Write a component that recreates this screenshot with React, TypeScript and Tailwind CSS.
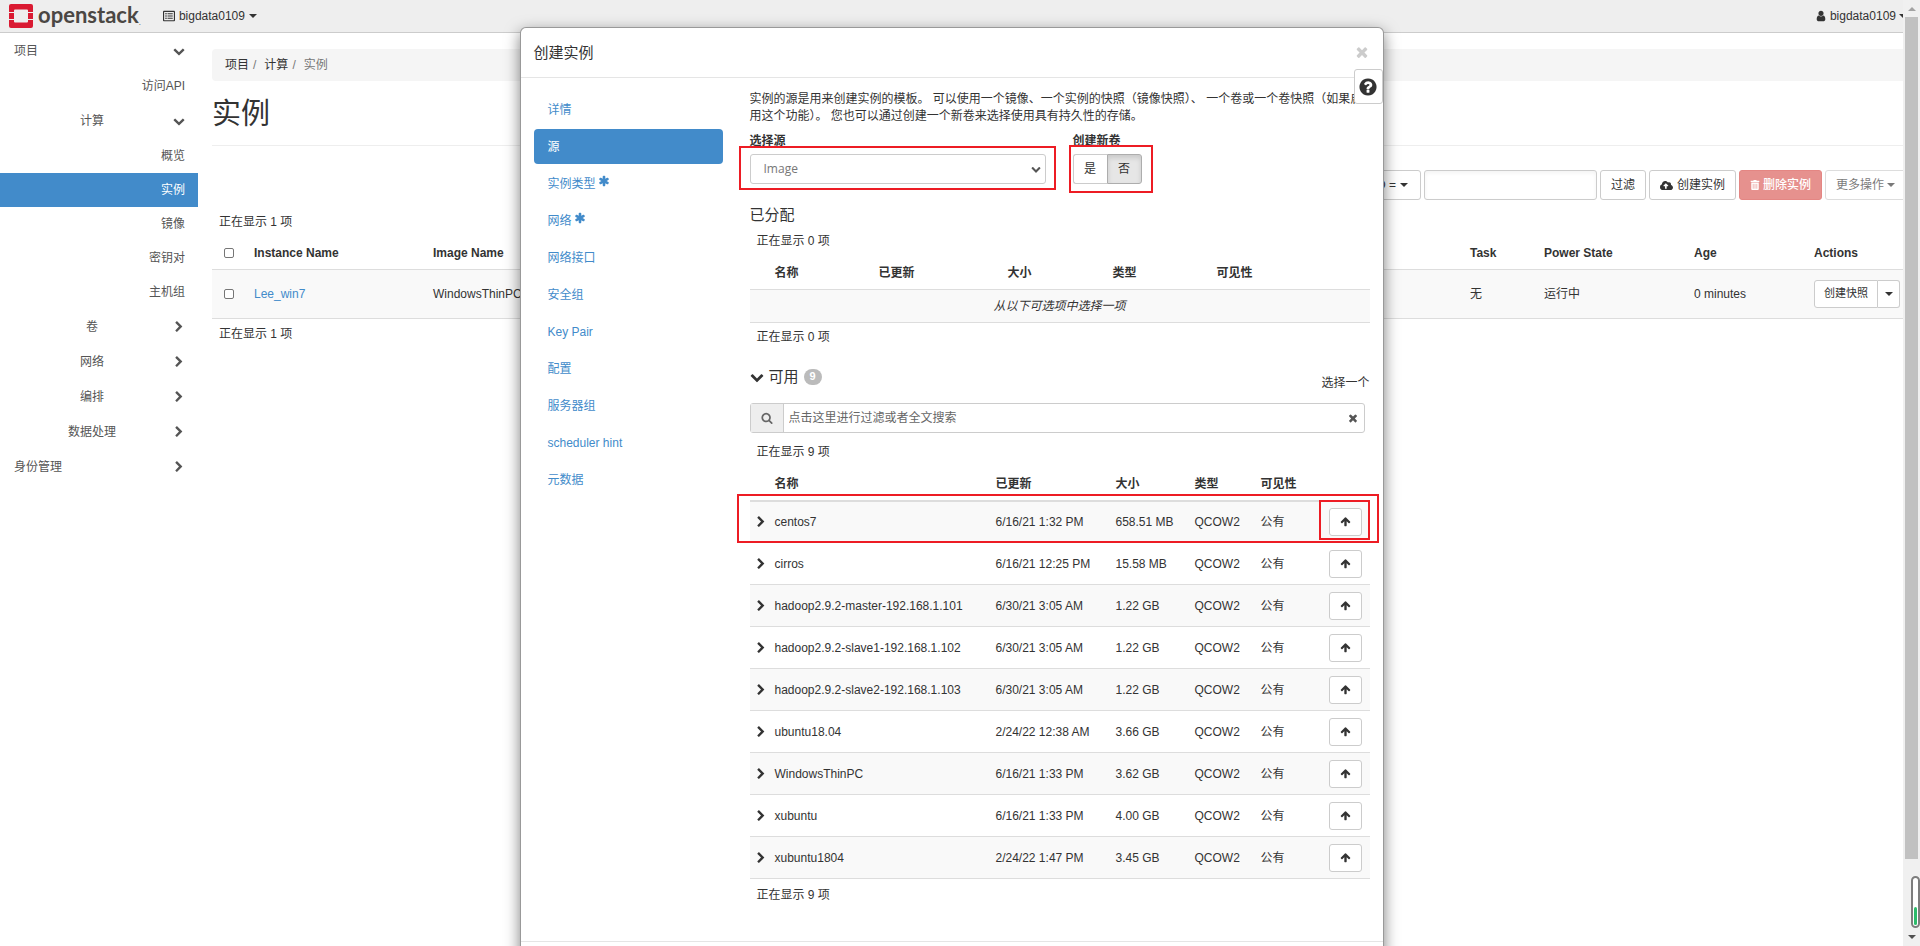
import type { ReactNode } from "react";
import { FaCloudUploadAlt, FaRegListAlt, FaTrashAlt } from "react-icons/fa";

const ICONS = {
  right:
    "M1363 877l-742 742q-19 19-45 19t-45-19l-166-166q-19-19-19-45t19-45l531-531-531-531q-19-19-19-45t19-45l166-166q19-19 45-19t45 19l742 742q19 19 19 45t-19 45z",
  down: "M1683 808l-742 741q-19 19-45 19t-45-19l-742-741q-19-19-19-45.5t19-45.5l166-165q19-19 45-19t45 19l531 531 531-531q19-19 45-19t45 19l166 165q19 19 19 45.5t-19 45.5z",
  up: "M1675 971q0 51-37 90l-75 75q-38 38-91 38-54 0-90-38l-294-293v704q0 52-37.5 84.5t-90.5 32.5h-128q-53 0-90.5-32.5t-37.5-84.5v-704l-294 293q-36 38-90 38t-90-38l-75-75q-38-38-38-90 0-53 38-91l651-651q35-37 90-37 54 0 91 37l651 651q37 39 37 91z",
  times:
    "M1490 1322q0 40-28 68l-136 136q-28 28-68 28t-68-28l-294-294-294 294q-28 28-68 28t-68-28l-136-136q-28-28-28-68t28-68l294-294-294-294q-28-28-28-68t28-68l136-136q28-28 68-28t68 28l294 294 294-294q28-28 68-28t68 28l136 136q28 28 28 68t-28 68l-294 294 294 294q28 28 28 68z",
  asterisk:
    "M1546 1050q46 26 59.5 77.5t-12.5 97.5l-64 110q-26 46-77.5 59.5t-97.5-12.5l-266-153v307q0 52-38 90t-90 38h-128q-52 0-90-38t-38-90v-307l-266 153q-46 26-97.5 12.5t-77.5-59.5l-64-110q-26-46-12.5-97.5t59.5-77.5l266-154-266-154q-46-26-59.5-77.5t12.5-97.5l64-110q26-46 77.5-59.5t97.5 12.5l266 153v-307q0-52 38-90t90-38h128q52 0 90 38t38 90v307l266-153q46-26 97.5-12.5t77.5 59.5l64 110q26 46 12.5 97.5t-59.5 77.5l-266 154z",
  search:
    "M1216 832q0-185-131.5-316.5t-316.5-131.5-316.5 131.5-131.5 316.5 131.5 316.5 316.5 131.5 316.5-131.5 131.5-316.5zm512 832q0 52-38 90t-90 38q-54 0-90-38l-343-342q-179 124-399 124-143 0-273.5-55.5t-225-150-150-225-55.5-273.5 55.5-273.5 150-225 225-150 273.5-55.5 273.5 55.5 225 150 150 225 55.5 273.5q0 220-124 399l343 343q37 37 37 90z",
  user: "M1536 1399q0 109-62.5 187t-150.5 78h-854q-88 0-150.5-78t-62.5-187q0-85 8.5-160.5t31.5-152 58.5-131 94-89 134.5-34.5q131 128 313 128t313-128q76 0 134.5 34.5t94 89 58.5 131 31.5 152 8.5 160.5zm-256-887q0 159-112.5 271.5t-271.5 112.5-271.5-112.5-112.5-271.5 112.5-271.5 271.5-112.5 271.5 112.5 112.5 271.5z",
  help: "M1024 1376v-192q0-14-9-23t-23-9h-192q-14 0-23 9t-9 23v192q0 14 9 23t23 9h192q14 0 23-9t9-23zm256-672q0-88-55.5-163t-138.5-116-170-41q-243 0-371 213-15 24 8 42l132 100q7 6 19 6 16 0 25-12 53-68 86-92 34-24 86-24 48 0 85.5 26t37.5 59q0 38-20 61t-68 45q-63 28-115.5 86.5t-52.5 125.5v36q0 14 9 23t23 9h192q14 0 23-9t9-23q0-19 21.5-49.5t54.5-49.5q32-18 49-28.5t46-35 44.5-48 28-60.5 12.5-81zm384 192q0 209-103 385.5t-279.5 279.5-385.5 103-385.5-103-279.5-279.5-103-385.5 103-385.5 279.5-279.5 385.5-103 385.5 103 279.5 279.5 103 385.5z",
};

function Icon({ name, className = "" }: { name: keyof typeof ICONS; className?: string }) {
  return (
    <svg viewBox="0 0 1792 1792" className={`shrink-0 fill-current ${className}`} aria-hidden="true">
      <path d={ICONS[name]} />
    </svg>
  );
}

function Caret() {
  return (
    <svg viewBox="0 0 8 4" className="w-2 h-1 shrink-0 fill-current" aria-hidden="true">
      <path d="M0 0h8L4 4z" />
    </svg>
  );
}

function Logo() {
  return (
    <a href="#" className="flex items-center text-[#4b4743]">
      <svg viewBox="0 0 24 24" className="w-6 h-6" aria-hidden="true">
        <path
          fill="#da1a32"
          d="M2 0h20a2 2 0 0 1 2 2v6h-5V6.500a1 1 0 0 0-1-1H6a1 1 0 0 0-1 1V8H0V2a2 2 0 0 1 2-2zM0 9h5v6H0zM19 9h5v6h-5zM0 16h5v1.500a1 1 0 0 0 1 1h12a1 1 0 0 0 1-1V16h5v6a2 2 0 0 1-2 2H2a2 2 0 0 1-2-2z"
        />
      </svg>
      <span className="ml-[5px] pb-[2px] text-[22px] leading-6 font-bold font-['Lato',sans-serif]">openstack</span>
      <span className="self-end text-[8px] leading-3">.</span>
    </a>
  );
}

type NavItem = { label: string; level: 0 | 1 | 2; open?: boolean; active?: boolean };

const NAV: NavItem[] = [
  { label: "项目", level: 0, open: true },
  { label: "访问API", level: 2 },
  { label: "计算", level: 1, open: true },
  { label: "概览", level: 2 },
  { label: "实例", level: 2, active: true },
  { label: "镜像", level: 2 },
  { label: "密钥对", level: 2 },
  { label: "主机组", level: 2 },
  { label: "卷", level: 1 },
  { label: "网络", level: 1 },
  { label: "编排", level: 1 },
  { label: "数据处理", level: 1 },
  { label: "身份管理", level: 0 },
];

function Sidebar() {
  return (
    <nav className="w-[198px] shrink-0 text-[#555]">
      {NAV.map((item) =>
        item.level === 2 ? (
          <a
            key={item.label}
            href="#"
            className={`flex h-[34px] items-center justify-end pr-[13px] ${
              item.active ? "bg-[#428bca] text-white" : ""
            }`}
          >
            {item.label}
          </a>
        ) : (
          <button
            key={item.label}
            className={`flex w-full items-center pr-[13px] pl-[14px] ${item.open ? "h-9" : "h-[35px]"}`}
          >
            <span className={item.level === 1 ? "w-[156px] text-center" : "w-[156px] text-left"}>{item.label}</span>
            <Icon name={item.open ? "down" : "right"} className="ml-auto w-3 h-3" />
          </button>
        ),
      )}
    </nav>
  );
}

const btn = "flex items-center justify-center rounded-[3px] border border-[#ccc] bg-white text-[#333]";

function Checkbox({ label }: { label: string }) {
  return (
    <input
      type="checkbox"
      aria-label={label}
      className="block w-[10px] h-[10px] appearance-none rounded-[2px] border border-[#767676] bg-white"
    />
  );
}

function Instances() {
  return (
    <main className="min-w-0 flex-1 pt-4 pr-[14px] pl-[14px]">
      <div className="flex h-8 items-center rounded bg-[#f5f5f5] px-[13px]">
        <a href="#">项目</a>
        <span className="mr-2 ml-1 text-[#777]">/</span>
        <a href="#">计算</a>
        <span className="mr-2 ml-1 text-[#777]">/</span>
        <span className="text-[#777]">实例</span>
      </div>
      <h1 className="mt-[13px] text-[29px] leading-10">实例</h1>
      <hr className="mt-[11px] border-[#eee]" />

      <div className="mt-6 flex h-[30px] justify-end gap-[3px]">
        <button className={`${btn} gap-1 px-3`}>
          实例 ID = <Caret />
        </button>
        <input aria-label="过滤值" className="w-[173px] rounded-[3px] border border-[#ccc] bg-white px-3 shadow-inner" />
        <button className={`${btn} px-[10px]`}>过滤</button>
        <button className={`${btn} gap-1 px-[10px]`}>
          <FaCloudUploadAlt className="w-[13px] h-[13px]" />
          创建实例
        </button>
        <button className="flex items-center gap-[3px] rounded-[3px] border border-[#e48683] bg-[#e6918e] px-[10px] font-medium text-white">
          <FaTrashAlt className="w-[10px] h-[10px]" />
          删除实例
        </button>
        <button className={`${btn} gap-[3px] px-[10px] opacity-65`}>
          更多操作
          <Caret />
        </button>
      </div>

      <div className="mt-3 px-[7px] leading-5">正在显示 1 项</div>
      <table className="w-full table-fixed border-collapse text-left">
        <colgroup>
          <col className="w-[30px]" />
          <col className="w-[179px]" />
          <col />
          <col className="w-[74px]" />
          <col className="w-[150px]" />
          <col className="w-[120px]" />
          <col className="w-[104px]" />
        </colgroup>
        <thead>
          <tr className="h-[37px] border-b border-[#ddd]">
            <th className="pt-[6px] pl-3">
              <Checkbox label="全选" />
            </th>
            <th className="pt-[6px] pl-3">Instance Name</th>
            <th className="pt-[6px] pl-3">Image Name</th>
            <th className="pt-[6px] pl-3">Task</th>
            <th className="pt-[6px] pl-3">Power State</th>
            <th className="pt-[6px] pl-3">Age</th>
            <th className="pt-[6px] pl-3">Actions</th>
          </tr>
        </thead>
        <tbody>
          <tr className="h-[49px] border-b border-[#ddd] bg-[#f9f9f9]">
            <td className="pl-3">
              <Checkbox label="Lee_win7" />
            </td>
            <td className="pl-3">
              <a href="#" className="text-[#428bca]">
                Lee_win7
              </a>
            </td>
            <td className="pl-3">WindowsThinPC</td>
            <td className="pl-3">无</td>
            <td className="pl-3">运行中</td>
            <td className="pl-3">0 minutes</td>
            <td className="pl-3">
              <div className="flex h-7 text-[11px]">
                <button className={`${btn} w-16 rounded-r-none`}>创建快照</button>
                <button aria-label="更多" className={`${btn} w-[22px] rounded-l-none border-l-0`}>
                  <Caret />
                </button>
              </div>
            </td>
          </tr>
        </tbody>
      </table>
      <div className="mt-[5px] px-[7px] leading-5">正在显示 1 项</div>
    </main>
  );
}

const STEPS = [
  { label: "详情" },
  { label: "源", active: true },
  { label: "实例类型", required: true },
  { label: "网络", required: true },
  { label: "网络接口" },
  { label: "安全组" },
  { label: "Key Pair" },
  { label: "配置" },
  { label: "服务器组" },
  { label: "scheduler hint" },
  { label: "元数据" },
];

const IMAGES = [
  ["centos7", "6/16/21 1:32 PM", "658.51 MB"],
  ["cirros", "6/16/21 12:25 PM", "15.58 MB"],
  ["hadoop2.9.2-master-192.168.1.101", "6/30/21 3:05 AM", "1.22 GB"],
  ["hadoop2.9.2-slave1-192.168.1.102", "6/30/21 3:05 AM", "1.22 GB"],
  ["hadoop2.9.2-slave2-192.168.1.103", "6/30/21 3:05 AM", "1.22 GB"],
  ["ubuntu18.04", "2/24/22 12:38 AM", "3.66 GB"],
  ["WindowsThinPC", "6/16/21 1:33 PM", "3.62 GB"],
  ["xubuntu", "6/16/21 1:33 PM", "4.00 GB"],
  ["xubuntu1804", "2/24/22 1:47 PM", "3.45 GB"],
];

// Red frame drawn over the content it surrounds
function Mark({ className }: { className: string }) {
  return <span className={`pointer-events-none absolute z-10 border-2 border-[#ed1c24] ${className}`} />;
}

function Count({ children }: { children: ReactNode }) {
  return <div className="px-[7px] leading-5">{children}</div>;
}

function Allocated() {
  return (
    <section>
      <h2 className="text-[15px] leading-6">已分配</h2>
      <div className="mt-1">
        <Count>正在显示 0 项</Count>
      </div>
      <table className="mt-[3px] w-full table-fixed border-collapse text-left">
        <colgroup>
          <col className="w-[17px]" />
          <col className="w-[104px]" />
          <col className="w-[129px]" />
          <col className="w-[105px]" />
          <col className="w-[104px]" />
          <col />
        </colgroup>
        <thead>
          <tr className="h-[35px] border-b border-[#ddd]">
            <th />
            <th className="pt-1 pl-2">名称</th>
            <th className="pt-1 pl-2">已更新</th>
            <th className="pt-1 pl-2">大小</th>
            <th className="pt-1 pl-2">类型</th>
            <th className="pt-1 pl-2">可见性</th>
          </tr>
        </thead>
        <tbody>
          <tr className="h-[33px] border-b border-[#ddd] bg-[#f9f9f9]">
            <td colSpan={6} className="text-center italic">
              从以下可选项中选择一项
            </td>
          </tr>
        </tbody>
      </table>
      <div className="mt-1">
        <Count>正在显示 0 项</Count>
      </div>
    </section>
  );
}

function Available() {
  return (
    <section className="mt-4">
      <div className="flex items-center">
        <Icon name="down" className="w-[14px] h-[14px]" />
        <h2 className="ml-[5px] text-[15px] leading-6">可用</h2>
        <span className="ml-[5px] flex h-4 w-[18px] items-center justify-center rounded-full bg-[#bbb] text-[11px] font-bold text-white">
          9
        </span>
        <span className="ml-auto pt-3">选择一个</span>
      </div>
      <div className="mt-3 mr-[5px] flex h-[30px] items-center rounded-[3px] border border-[#ccc]">
        <label htmlFor="image-filter" className="flex h-full w-[33px] items-center justify-center border-r border-[#ccc] bg-[#eee] text-[#666]">
          <Icon name="search" className="w-3 h-3" />
        </label>
        <input
          id="image-filter"
          aria-label="过滤"
          placeholder="点击这里进行过滤或者全文搜索"
          className="h-full min-w-0 flex-1 px-[5px] outline-none placeholder:text-[#666]"
        />
        <button aria-label="清除" className="pr-[5px] text-[#555]">
          <Icon name="times" className="w-3 h-3" />
        </button>
      </div>
      <div className="mt-[9px]">
        <Count>正在显示 9 项</Count>
      </div>
      <div className="relative mt-[3px]">
        <table className="w-full table-fixed border-collapse text-left">
          <colgroup>
            <col className="w-[17px]" />
            <col />
            <col className="w-[120px]" />
            <col className="w-[79px]" />
            <col className="w-[66px]" />
            <col className="w-[67px]" />
            <col className="w-[50px]" />
          </colgroup>
          <thead>
            <tr className="h-9 border-b-2 border-[#ddd]">
              <th />
              <th className="pt-1 pl-2">名称</th>
              <th className="pt-1 pl-2">已更新</th>
              <th className="pt-1 pl-2">大小</th>
              <th className="pt-1 pl-2">类型</th>
              <th className="pt-1 pl-2">可见性</th>
              <th />
            </tr>
          </thead>
          <tbody>
            {IMAGES.map(([name, updated, size]) => (
              <tr key={name} className="h-[42px] border-b border-[#ddd] odd:bg-[#f9f9f9]">
                <td className="pl-[5px]">
                  <button aria-label={`展开 ${name}`} className="block">
                    <Icon name="right" className="w-3 h-3" />
                  </button>
                </td>
                <td className="pl-2">{name}</td>
                <td className="pl-2">{updated}</td>
                <td className="pl-2">{size}</td>
                <td className="pl-2">QCOW2</td>
                <td className="pl-2">公有</td>
                <td className="pl-[9px]">
                  <button aria-label={`选择 ${name}`} className={`${btn} h-7 w-[33px]`}>
                    <Icon name="up" className="w-[11px] h-[11px]" />
                  </button>
                </td>
              </tr>
            ))}
          </tbody>
        </table>
        <Mark className="top-[29px] -right-[9px] -left-[13px] h-[49px]" />
        <Mark className="top-[35px] right-0 h-10 w-[51px]" />
      </div>
      <div className="mt-[6px]">
        <Count>正在显示 9 项</Count>
      </div>
    </section>
  );
}

function LaunchDialog() {
  return (
    <div
      role="dialog"
      aria-label="创建实例"
      className="relative flex min-h-[1000px] w-full max-w-[864px] flex-col rounded-md border border-black/40 bg-white shadow-[0_5px_15px_rgba(0,0,0,0.5)]"
    >
      <div className="flex h-[50px] items-center justify-between border-b border-[#e5e5e5] px-[13px]">
        <h3 className="text-[15px]">创建实例</h3>
        <button aria-label="关闭" className="pb-[2px] text-[#ccc]">
          <Icon name="times" className="w-4 h-4" />
        </button>
      </div>
      <button aria-label="帮助" className={`${btn} absolute top-[41px] right-0 h-[35px] w-[29px]`}>
        <Icon name="help" className="w-5 h-5" />
      </button>
      <div className="flex px-[13px] pt-[13px] pb-9">
        <ul className="w-[189px] shrink-0 space-y-[2px] pt-[1px]">
          {STEPS.map((step) => (
            <li key={step.label}>
              <a
                href="#"
                className={`flex h-[35px] items-center rounded px-[14px] ${
                  step.active ? "bg-[#428bca] text-white" : "text-[#428bca]"
                }`}
              >
                {step.label}
                {step.required && <Icon name="asterisk" className="mb-[6px] ml-[2px] w-3 h-3" />}
              </a>
            </li>
          ))}
        </ul>
        <div className="ml-[27px] min-w-0 flex-1">
          <p className="leading-[17px]">
            实例的源是用来创建实例的模板。 可以使用一个镜像、一个实例的快照（镜像快照）、 一个卷或一个卷快照（如果启用这个功能）。
            您也可以通过创建一个新卷来选择使用具有持久性的存储。
          </p>
          <div className="mt-[6px] flex gap-[27px]">
            <div className="relative w-[296px]">
              <label htmlFor="source" className="block leading-5 font-bold">
                选择源
              </label>
              <div className="relative mt-[3px]">
                <select
                  id="source"
                  className="h-[30px] w-full appearance-none rounded-[3px] border border-[#ccc] bg-white px-[13px] font-['Open_Sans',sans-serif] text-[#777]"
                >
                  <option>Image</option>
                </select>
                <Icon name="down" className="pointer-events-none absolute top-[10px] right-[5px] w-[10px] h-[10px] text-[#555]" />
              </div>
              <Mark className="top-[15px] -right-[10px] -left-[11px] h-11" />
            </div>
            <div className="relative">
              <span className="block leading-5 font-bold">创建新卷</span>
              <div className="mt-[3px] flex h-[30px]">
                <button className={`${btn} w-[34px] rounded-r-none border-r-0`}>是</button>
                <button className="w-[35px] rounded-r-[3px] border border-[#adadad] bg-[#e6e6e6] shadow-[inset_0_3px_5px_rgba(0,0,0,0.125)]">
                  否
                </button>
              </div>
              <Mark className="top-[14px] -right-[11px] -left-1 h-12" />
            </div>
          </div>
          <div className="mt-[19px]">
            <Allocated />
          </div>
          <Available />
        </div>
      </div>
      <div className="flex-1 border-t border-[#e5e5e5]" />
    </div>
  );
}

function Scrollbar() {
  return (
    <div className="relative flex w-[17px] shrink-0 flex-col items-center bg-[#f0f0f0] py-[7px]">
      <svg viewBox="0 0 8 4" className="w-2 h-1 shrink-0 fill-[#a3a3a3]" aria-hidden="true">
        <path d="M0 4h8L4 0z" />
      </svg>
      <div className="mt-[6px] mb-[76px] w-[13px] flex-1 bg-[#c1c1c1]" />
      <span className="text-[#505050]">
        <Caret />
      </span>
      <div className="absolute right-0 bottom-[18px] flex h-[52px] w-[9px] items-end justify-center rounded-full border-2 border-[#7d7d7d] bg-white pb-[1px]">
        <div className="h-[18px] w-[3px] rounded-full bg-[#2dbb6b]" />
      </div>
    </div>
  );
}

export default function App() {
  return (
    <div className="relative h-screen overflow-hidden bg-white font-['Liberation_Sans','Noto_Sans_CJK_SC',sans-serif] text-xs text-[#333]">
      <header className="flex h-[33px] items-center border-b border-[#ccc] bg-[#eee] pl-[9px]">
        <Logo />
        <button className="ml-[22px] flex items-center gap-1">
          <FaRegListAlt className="w-3 h-3" />
          bigdata0109
          <Caret />
        </button>
        <button className="mr-[13px] ml-auto flex items-center gap-[3px]">
          <Icon name="user" className="w-3 h-3" />
          bigdata0109
          <Caret />
        </button>
      </header>
      <div className="flex">
        <Sidebar />
        <Instances />
      </div>

      <div className="absolute inset-0 flex">
        <div className="flex flex-1 items-start justify-center overflow-hidden pt-[27px]">
          <LaunchDialog />
        </div>
        <Scrollbar />
      </div>
    </div>
  );
}
